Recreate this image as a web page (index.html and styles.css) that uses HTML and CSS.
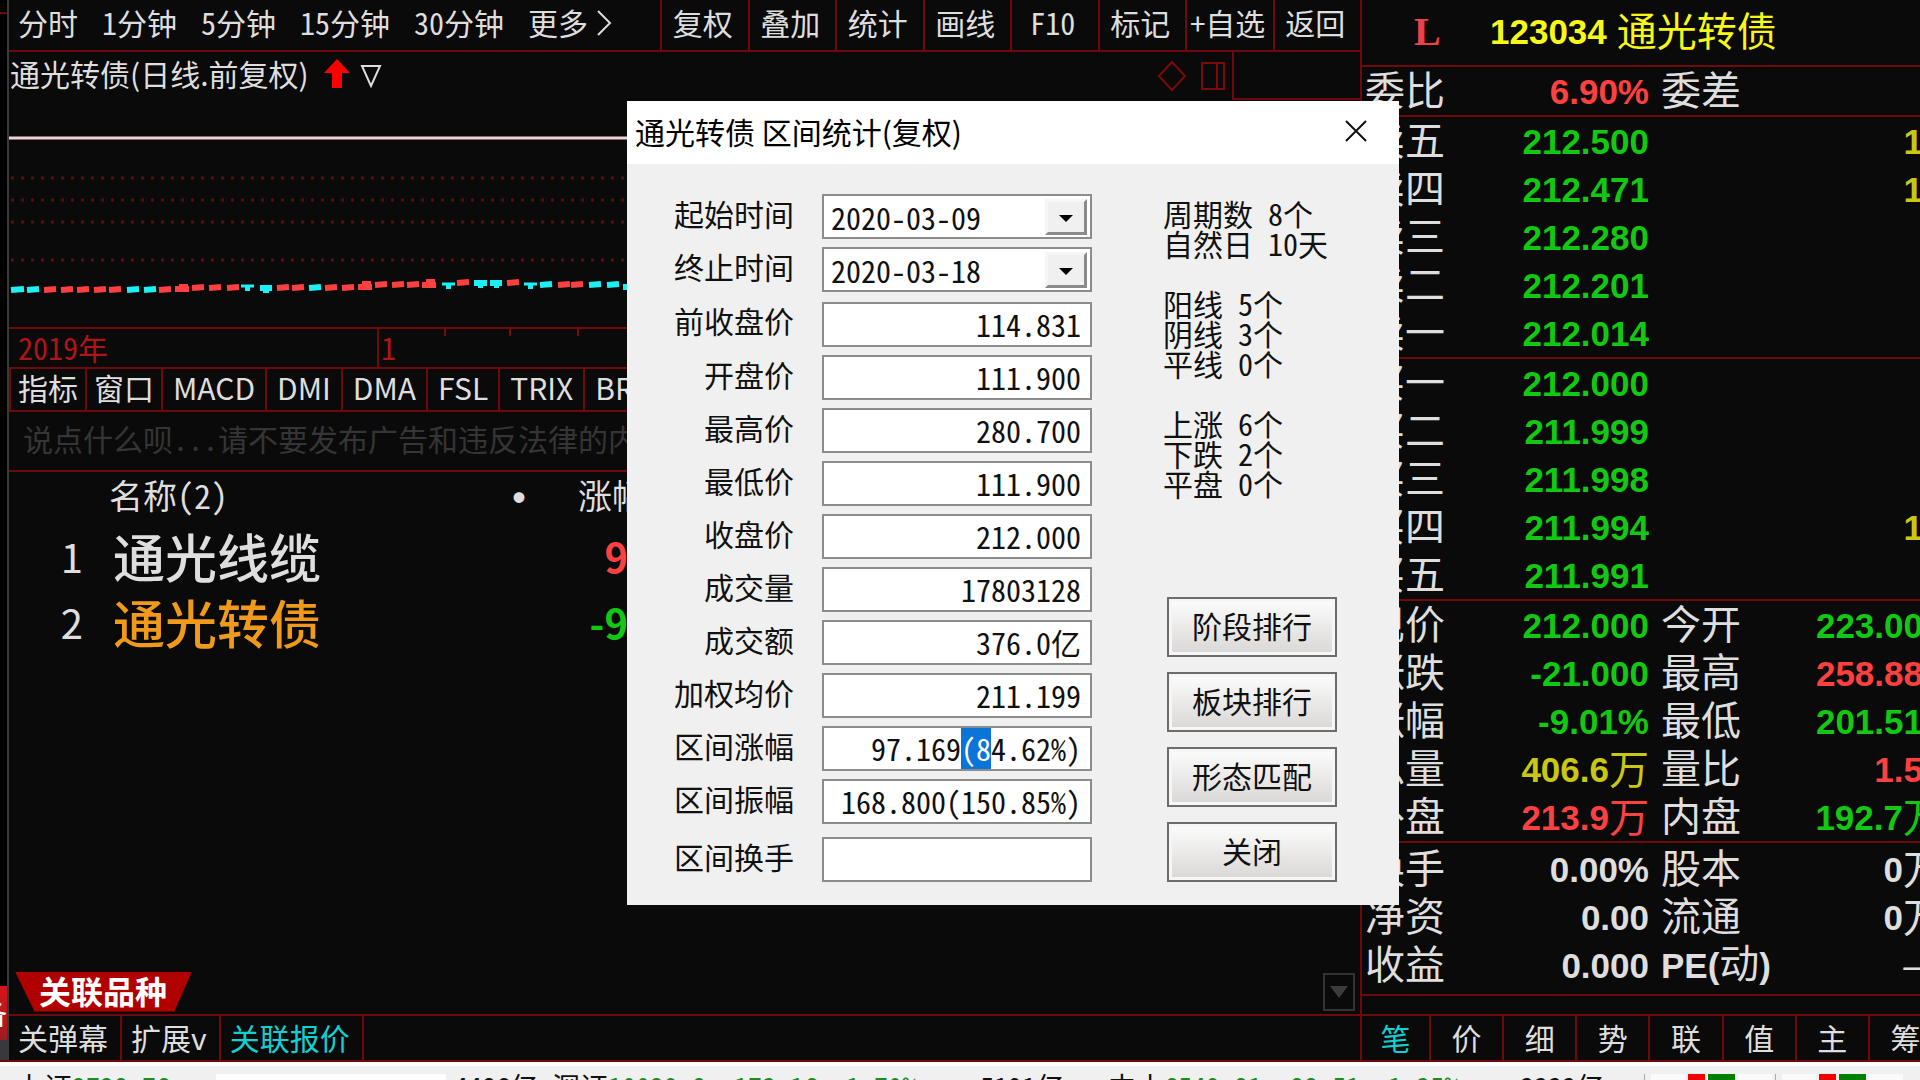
FILE: index.html
```html
<!DOCTYPE html>
<html lang="zh-CN">
<head>
<meta charset="utf-8">
<title>通光转债 区间统计</title>
<link rel="stylesheet" href="styles.css">
</head>
<body>
<div class="app">
  <div class="workspace">
    <aside class="strip"><span class="strip-line"></span><span class="strip-tab">备</span><span class="strip-foot"></span></aside>

    <main class="left">
      <nav class="toolbar">
        <div class="periods">
          <button>分时</button><button>1分钟</button><button>5分钟</button><button>15分钟</button><button>30分钟</button><button class="more">更多
            <svg width="16" height="30" viewBox="0 0 16 30"><path d="M2 4L14 16L2 28" fill="none" stroke="#ddd" stroke-width="2"/></svg></button>
        </div>
        <div class="tools">
          <button>复权</button><button>叠加</button><button>统计</button><button>画线</button><button>F10</button><button>标记</button><button>+自选</button><button>返回</button>
        </div>
      </nav>

      <section class="chart">
        <header class="chart-head">
          <h1>通光转债(日线.前复权)</h1>
          <svg class="arrow" width="26" height="30" viewBox="0 0 26 30"><path d="M13 0L26 14H18V29H8V14H0Z" fill="#f00"/></svg>
          <svg width="22" height="24" viewBox="0 0 22 24"><path d="M2 2H20L11 22Z" fill="none" stroke="#ddd" stroke-width="2"/></svg>
          <svg class="marks" width="70" height="30" viewBox="0 0 70 30"><g fill="none" stroke="#7c0a0a" stroke-width="2"><path d="M14 1L27 15L14 29L1 15Z"/><path d="M44 2H66V28H44ZM59 2V28"/></g></svg>
          <div class="corner"></div>
        </header>
        <svg class="plot" width="100%" height="227">
          <path d="M0 38H1352" stroke="#f0d4da" stroke-width="3"/>
          <g stroke="#5e0b0d" stroke-width="3" stroke-dasharray="3 7">
            <path d="M2 78H1352M2 100H1352M2 122H1352M2 160H1352"/>
          </g>
          <g fill="none" stroke-width="6">
            <path stroke="#ff4040" d="M35 190l12-1M52 190l12-1M68 190l12-1M85 190l12-1M100 190l12-1M150 190l12-1M166 189h14M183 188l12-1M200 188l12-1M218 188l12-1M268 188l12-1M283 188l12-1M316 188l12-1M333 188l12-1M349 187h14M366 185l12-1M383 185l12-1M398 185l12-1M413 185h14M448 183l12-1M498 183l12-1M549 185l12-1M562 185l12-1"/>
            <path stroke="#ff4040" d="M170 187h9M353 184h9M417 182h9"/>
            <path stroke="#1cf0f4" d="M2 190l13-1M18 190l12-1M118 190l12-1M135 190l12-1M251 188h12M300 188l12-1M465 183h13M481 183h12M531 185l12-1M580 185l12-1M598 185l12-1M614 187h8"/>
            <path stroke="#1cf0f4" stroke-width="3" d="M232 186h13M433 184h13M515 184h13"/>
            <path stroke="#1cf0f4" d="M236 188h5M254 190h6M437 186h5M469 185h5M485 185h5M519 186h5"/>
          </g>
        </svg>
        <div class="axis">
          <span>2019年</span><span class="month">1</span>
          <svg width="240" height="8"><path d="M48 0V7M113 0V7M181 0V7" stroke="#7c0a0a" stroke-width="2"/></svg>
        </div>
      </section>

      <nav class="indicators">
        <button>指标</button><button>窗口</button><button>MACD</button><button>DMI</button><button>DMA</button><button>FSL</button><button>TRIX</button><button>BR</button>
      </nav>

      <input class="chat" type="text" aria-label="弹幕" placeholder="说点什么呗...请不要发布广告和违反法律的内">

      <table class="related">
        <thead><tr><th class="idx"></th><th class="name">名称(2)</th><th class="dot">●</th><th class="chg">涨幅</th></tr></thead>
        <tbody>
          <tr><td class="idx">1</td><td class="name" colspan="2">通光线缆</td><td class="chg"><span class="red">9</span></td></tr>
          <tr><td class="idx">2</td><td class="name orange" colspan="2">通光转债</td><td class="chg"><span class="green">-9</span></td></tr>
        </tbody>
      </table>

      <div class="sheet-row">
        <button class="sheet-tab">关联品种</button>
        <button class="scroll-down" aria-label="向下"><svg width="18" height="12" viewBox="0 0 18 12"><path d="M0 0H18L9 12Z" fill="#3c3c3c"/></svg></button>
      </div>

      <nav class="bottom-tabs">
        <button>关弹幕</button><button>扩展v</button><button class="cyan">关联报价</button>
      </nav>
    </main>

    <aside class="quote">
      <header class="quote-head"><span class="flag">L</span><b class="num">123034</b><span class="title">通光转债</span></header>
      <dl class="group">
        <div><dt>委比</dt><dd class="red">6.90%</dd><dt>委差</dt><dd></dd></div>
      </dl>
      <dl class="group">
        <div><dt>卖五</dt><dd class="green">212.500</dd><dt></dt><dd class="cut yellow">1</dd></div>
        <div><dt>卖四</dt><dd class="green">212.471</dd><dt></dt><dd class="cut yellow">1</dd></div>
        <div><dt>卖三</dt><dd class="green">212.280</dd></div>
        <div><dt>卖二</dt><dd class="green">212.201</dd></div>
        <div><dt>卖一</dt><dd class="green">212.014</dd></div>
      </dl>
      <dl class="group">
        <div><dt>买一</dt><dd class="green">212.000</dd></div>
        <div><dt>买二</dt><dd class="green">211.999</dd></div>
        <div><dt>买三</dt><dd class="green">211.998</dd></div>
        <div><dt>买四</dt><dd class="green">211.994</dd><dt></dt><dd class="cut yellow">1</dd></div>
        <div><dt>买五</dt><dd class="green">211.991</dd></div>
      </dl>
      <dl class="group">
        <div><dt>现价</dt><dd class="green">212.000</dd><dt>今开</dt><dd class="cut green">223.00</dd></div>
        <div><dt>涨跌</dt><dd class="green">-21.000</dd><dt>最高</dt><dd class="cut red">258.88</dd></div>
        <div><dt>涨幅</dt><dd class="green">-9.01%</dd><dt>最低</dt><dd class="cut green">201.51</dd></div>
        <div><dt>总量</dt><dd class="yellow">406.6<i>万</i></dd><dt>量比</dt><dd class="cut red">1.5</dd></div>
        <div><dt>外盘</dt><dd class="red">213.9<i>万</i></dd><dt>内盘</dt><dd class="green">192.7<i>万</i></dd></div>
      </dl>
      <dl class="group last">
        <div><dt>换手</dt><dd>0.00%</dd><dt>股本</dt><dd>0<i>万</i></dd></div>
        <div><dt>净资</dt><dd>0.00</dd><dt>流通</dt><dd>0<i>万</i></dd></div>
        <div><dt>收益</dt><dd>0.000</dd><dt><b class="num">PE(</b>动<b class="num">)</b></dt><dd class="cut"><i>–</i></dd></div>
      </dl>
      <nav class="quote-tabs">
        <button class="cyan">笔</button><button>价</button><button>细</button><button>势</button><button>联</button><button>值</button><button>主</button><button>筹</button>
      </nav>
    </aside>
  </div>

  <footer class="status">
    <span class="s1">上证<em>2728.76</em></span><span class="blank"></span><span class="s2">4486亿</span>
    <span class="s3">深证<em>10029.8 -173.16 -1.70%</em></span><span class="s4">5191亿</span>
    <span class="s5">中小<em>6549.81 -88.51 -1.35%</em></span><span class="s6">3333亿</span>
    <span class="meter"><i></i><i class="r"></i><i class="g"></i><i></i></span><span class="meter"><i></i><i class="r"></i><i class="g"></i><i></i></span>
  </footer>
</div>

<section class="dialog" role="dialog" aria-labelledby="dlg-title">
  <header class="dlg-head">
    <h2 id="dlg-title">通光转债 区间统计(复权)</h2>
    <button class="close" aria-label="关闭窗口"><svg width="22" height="22" viewBox="0 0 22 22"><path d="M1 1L21 21M21 1L1 21" stroke="#111" stroke-width="2"/></svg></button>
  </header>
  <form class="dlg-body">
    <div class="fields">
      <label for="f1">起始时间</label><div class="combo"><select id="f1"><option>2020-03-09</option></select><span class="drop"></span></div>
      <label for="f2">终止时间</label><div class="combo"><select id="f2"><option>2020-03-18</option></select><span class="drop"></span></div>
      <label for="f3">前收盘价</label><input id="f3" class="gap-s" value="114.831">
      <label for="f4">开盘价</label><input id="f4" value="111.900">
      <label for="f5">最高价</label><input id="f5" value="280.700">
      <label for="f6">最低价</label><input id="f6" value="111.900">
      <label for="f7">收盘价</label><input id="f7" value="212.000">
      <label for="f8">成交量</label><input id="f8" value="17803128">
      <label for="f9">成交额</label><input id="f9" value="376.0亿">
      <label for="f10">加权均价</label><input id="f10" value="211.199">
      <label for="f11">区间涨幅</label><input id="f11" value="97.169(84.62%)">
      <label for="f12">区间振幅</label><input id="f12" value="168.800(150.85%)">
      <label for="f13" class="gap-m">区间换手</label><input id="f13" class="gap-m" value="">
    </div>
    <div class="side">
      <pre class="stats">周期数 8个
自然日 10天

阳线 5个
阴线 3个
平线 0个

上涨 6个
下跌 2个
平盘 0个</pre>
      <div class="actions">
        <button type="button">阶段排行</button><button type="button">板块排行</button><button type="button">形态匹配</button><button type="button">关闭</button>
      </div>
    </div>
  </form>
</section>
<script src="main.js"></script>
</body>
</html>
```
FILE: main.js
```js
const field = document.getElementById("f11");
field.focus();
field.setSelectionRange(6, 8);
```
FILE: styles.css
```css
* { box-sizing: border-box; }
:root {
  --line: #6e0a0c;
  --ink: #dedede;
  --bg: #0a0a0a;
  --cjk: "Noto Sans CJK SC", sans-serif;
  --mono: "Noto Sans Mono CJK SC", "Noto Sans CJK SC", monospace;
}
body {
  margin: 0;
  background: var(--bg);
  color: var(--ink);
  font: 30px/1 var(--cjk);
  overflow: hidden;
}
button {
  background: none;
  border: 0;
  padding: 0;
  margin: 0;
  color: inherit;
  font: inherit;
  white-space: nowrap;
}
h1, h2, dl, dd, pre { margin: 0; font: inherit; }
i, em { font-style: normal; }
.red { color: #ff4040; }
.green { color: #12c812; }
.yellow { color: #c8c812; }
.cyan { color: #10d0d0; }

.app { display: flex; flex-direction: column; height: 100vh; }
.workspace {
  flex: 1;
  min-height: 0;
  display: grid;
  grid-template-columns: 9px minmax(0, 1fr) 560px;
  border-bottom: 2px solid var(--line);
}

/* left edge strip */
.strip {
  display: flex;
  flex-direction: column;
  background: #000;
  border-right: 2px solid #3a3a3a;
  overflow: hidden;
}
.strip-line { height: 14px; border-bottom: 2px solid var(--line); }
.strip-tab {
  margin-top: auto;
  height: 54px;
  display: flex;
  justify-content: flex-end;
  align-items: center;
  font-size: 28px;
  color: #fff;
  background: linear-gradient(#d8141a, #a01c20);
}
.strip-foot { height: 20px; background: #3a383e; }

/* main column */
.left { display: flex; flex-direction: column; min-width: 0; }
.toolbar { display: flex; height: 52px; border-bottom: 2px solid var(--line); }
.periods {
  flex: 1;
  display: flex;
  align-items: center;
  gap: 24px;
  padding: 0 0 6px 9px;
  font-family: var(--mono);
}
.more { display: flex; align-items: center; gap: 8px; }
.tools {
  flex: 0 0 700px;
  display: grid;
  grid-template-columns: repeat(8, minmax(0, 1fr));
  font-family: var(--mono);
}
.tools button { border-left: 2px solid var(--line); padding: 0 4px 6px 0; }

.chart { border-bottom: 2px solid var(--line); }
.chart-head { display: flex; align-items: center; height: 48px; }
.chart-head h1 { padding: 0 0 6px 1px; }
.arrow { margin: 0 10px 4px 15px; }
.marks { margin-left: auto; margin-right: 4px; }
.corner {
  align-self: stretch;
  width: 128px;
  border-left: 2px solid var(--line);
  border-bottom: 2px solid var(--line);
}
.plot { display: block; }
.axis {
  display: flex;
  height: 40px;
  border-top: 2px solid var(--line);
  color: #b01414;
  font-family: var(--mono);
  line-height: 36px;
}
.axis span { flex: 0 0 368px; padding-left: 9px; }
.axis .month { flex: 0 0 20px; padding-left: 2px; border-left: 2px solid var(--line); }

.indicators { display: flex; height: 43px; border-bottom: 2px solid var(--line); }
.indicators button { border-left: 2px solid var(--line); padding: 0 7px 6px; }
.indicators button:nth-child(n+3) { padding: 0 10px 6px; }

.chat {
  height: 60px;
  padding: 0 14px 6px;
  border: 0;
  border-bottom: 2px solid var(--line);
  background: none;
  font: 30px/1 var(--mono);
}
.chat::placeholder { color: #353535; opacity: 1; }

.related { border-collapse: collapse; table-layout: fixed; width: 700px; }
.related th { height: 52px; padding: 0 0 6px; font: 34px/1 var(--mono); text-align: left; }
.related td { height: 66px; padding: 0 0 2px; }
.related .idx { width: 100px; padding-right: 26px; font-size: 40px; text-align: right; }
.related .name { width: 404px; }
.related td.name { padding-left: 4px; font-size: 52px; font-weight: 500; }
.related .orange { color: #f09a1c; }
.related .dot { width: 65px; padding: 0; font-size: 12px; }
.related .chg { width: 131px; }
.related td.chg { font-size: 40px; font-weight: 700; }
.related td.chg span { display: block; width: 50px; text-align: right; }

.sheet-row {
  margin-top: auto;
  display: flex;
  justify-content: space-between;
  align-items: center;
  height: 45px;
  padding: 0 5px 2px 6px;
  border-bottom: 2px solid var(--line);
}
.sheet-tab {
  width: 177px;
  height: 40px;
  padding: 0 0 4px 24px;
  text-align: left;
  font-size: 32px;
  font-weight: 700;
  color: #fff;
  background: #b00000;
  clip-path: polygon(0 0, 100% 0, 90% 100%, 11% 100%);
}
.scroll-down {
  display: flex;
  justify-content: center;
  align-items: center;
  width: 32px;
  height: 38px;
  border: 2px solid #333;
}

.bottom-tabs { display: flex; height: 44px; }
.bottom-tabs button { padding: 0 12px 2px 9px; border-right: 2px solid var(--line); }

/* quote panel */
.quote {
  display: flex;
  flex-direction: column;
  min-width: 0;
  border-left: 2px solid var(--line);
  overflow: hidden;
  font-size: 40px;
}
.num { font: 700 35px/1 "Liberation Sans", sans-serif; }
.quote-head {
  display: flex;
  align-items: center;
  height: 67px;
  padding: 0 0 2px 52px;
  border-bottom: 2px solid var(--line);
  color: #f8f818;
}
.flag { flex: 0 0 76px; font: 700 40px/1 "Liberation Serif", serif; color: #f04048; }
.quote-head .num { margin-right: 10px; }
.quote-head .title { padding-bottom: 6px; }
.group { border-bottom: 2px solid var(--line); margin-right: -23px; }
.group > div {
  display: grid;
  grid-template-columns: 82px 202px 96px 1fr;
  align-items: center;
  height: 48px;
  padding-left: 3px;
}
.group dt { padding-bottom: 6px; white-space: nowrap; }
.group dt:nth-of-type(2) { padding-left: 12px; }
.group dd {
  display: flex;
  justify-content: flex-end;
  align-items: center;
  font: 700 35px/1 "Liberation Sans", sans-serif;
}
.group dd i { padding-bottom: 4px; font: 40px/1 var(--cjk); }
.group .cut { padding-right: 20px; }
.group.last { padding: 2px 0 5px; }
.quote-tabs {
  flex: 1;
  margin: 18px -23px 0 0;
  display: grid;
  grid-template-columns: 69px repeat(7, 1fr);
  border-top: 2px solid var(--line);
  font-size: 30px;
}
.quote-tabs button { border-right: 2px solid var(--line); padding-bottom: 2px; }

/* status bar */
.status {
  display: flex;
  height: 18px;
  padding: 6px 0 0 16px;
  border-top: 4px solid #fff;
  background: #f0f0f0;
  color: #111;
  font: 28px/1 var(--mono);
  white-space: nowrap;
  overflow: hidden;
}
.status em { color: #1f8a1f; }
.status .s1 { flex: 0 0 200px; }
.status .blank { flex: 0 0 230px; margin-top: 2px; background: #fff; }
.status .s2 { flex: 0 0 106px; padding-left: 8px; }
.status .s3 { flex: 0 0 428px; }
.status .s4 { flex: 0 0 128px; }
.status .s5 { flex: 0 0 412px; }
.status .s6 { flex: 0 0 124px; }
.meter {
  display: flex;
  gap: 3px;
  flex: 0 0 131px;
  margin-top: 2px;
  padding: 0 3px 0 6px;
  border-left: 1px solid #aaa;
}
.meter i { flex: 1; background: #fafafa; }
.meter .r { flex: 0 0 17px; background: #f00000; }
.meter .g { flex: 0 0 27px; background: #008000; }

/* statistics dialog */
.dialog {
  position: absolute;
  left: 627px;
  top: 101px;
  width: 772px;
  background: #f0f0f0;
  color: #111;
}
.dlg-head {
  display: flex;
  justify-content: space-between;
  align-items: center;
  height: 63px;
  padding: 0 32px 4px 8px;
  background: #fff;
  color: #000;
}
.close { display: flex; }
.dlg-body {
  display: flex;
  justify-content: space-between;
  padding: 30px 62px 23px 47px;
}
.fields {
  display: grid;
  grid-template-columns: 120px 270px;
  column-gap: 28px;
  row-gap: 8px;
  align-items: center;
}
.fields label { text-align: right; padding-bottom: 7px; }
.fields input, .fields select {
  appearance: none;
  width: 100%;
  height: 45px;
  padding: 0 9px 2px;
  border: 2px solid #8c8c8c;
  border-radius: 0;
  outline: 0;
  background: #fff;
  color: #111;
  font: 30px/1 var(--mono);
  text-align: right;
}
.fields select { display: block; padding: 0 7px; text-align: left; }
.fields input::selection { background: #0a74d8; color: #fff; }
.fields .gap-s { margin-top: 2px; }
.fields .gap-m { margin-top: 5px; }
.combo { position: relative; }
.drop {
  position: absolute;
  right: 5px;
  top: 5px;
  width: 42px;
  height: 36px;
  border: 3px solid;
  border-color: #f6f6f6 #8a8a8a #8a8a8a #f6f6f6;
  background: #f0f0f0;
  pointer-events: none;
}
.drop::after {
  content: "";
  display: block;
  margin: 13px auto 0;
  width: 14px;
  height: 7px;
  background: #000;
  clip-path: polygon(0 0, 100% 0, 50% 100%);
}
.side {
  display: flex;
  flex-direction: column;
  justify-content: space-between;
  width: 174px;
}
.stats { padding-top: 4px; font: 30px/30px var(--mono); }
.actions { display: flex; flex-direction: column; gap: 15px; padding-left: 4px; }
.actions button {
  height: 60px;
  padding-bottom: 4px;
  border: 2px solid #6c6c6c;
  box-shadow: inset 0 0 0 3px #f6f6f6;
  background: linear-gradient(#fdfdfd, #d9d7d5);
}
```
